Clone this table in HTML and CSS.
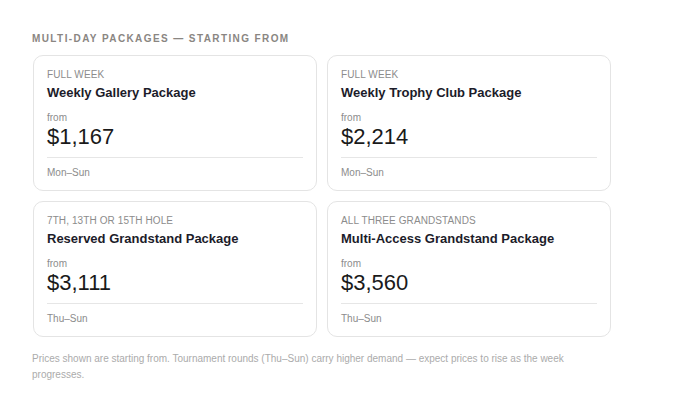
FILE: index.html
```html
<!DOCTYPE html>
<html>
<head>
<meta charset="utf-8">
<link rel="stylesheet" href="styles.css">
</head>
<body>
<main class="section">
  <h2 class="section-title">Multi-day packages — starting from</h2>
  <div class="grid">
    <div class="card">
      <div class="eyebrow">Full week</div>
      <div class="name">Weekly Gallery Package</div>
      <div class="from">from</div>
      <div class="price">$1,167</div>
      <div class="days">Mon–Sun</div>
    </div>
    <div class="card">
      <div class="eyebrow">Full week</div>
      <div class="name">Weekly Trophy Club Package</div>
      <div class="from">from</div>
      <div class="price">$2,214</div>
      <div class="days">Mon–Sun</div>
    </div>
    <div class="card">
      <div class="eyebrow">7th, 13th or 15th hole</div>
      <div class="name">Reserved Grandstand Package</div>
      <div class="from">from</div>
      <div class="price">$3,111</div>
      <div class="days">Thu–Sun</div>
    </div>
    <div class="card">
      <div class="eyebrow">All three grandstands</div>
      <div class="name">Multi-Access Grandstand Package</div>
      <div class="from">from</div>
      <div class="price">$3,560</div>
      <div class="days">Thu–Sun</div>
    </div>
  </div>
  <p class="note">Prices shown are starting from. Tournament rounds (Thu–Sun) carry higher demand — expect prices to rise as the week progresses.</p>
</main>
</body>
</html>
```

FILE: styles.css
```css
* { box-sizing: border-box; }
html, body { margin: 0; padding: 0; background: #fff; }
body { font-family: "Liberation Sans", Arial, sans-serif; color: #1a1a1a; }
.section { width: 580px; margin: 0 0 0 32px; padding-top: 32px; }
.section-title {
  margin: 0 0 10px 0;
  font-size: 10px;
  line-height: 13px;
  font-weight: 700;
  letter-spacing: 1.4px;
  text-transform: uppercase;
  color: #8a8682;
}
.grid {
  display: grid;
  grid-template-columns: 284px 284px;
  gap: 10px 10px;
  margin-left: 1px;
}
.card {
  border: 1px solid #e4e4e4;
  border-radius: 10px;
  padding: 12px 13px 0 13px;
  height: 136px;
  display: flex;
  flex-direction: column;
}
.eyebrow {
  font-size: 10px;
  line-height: 14px;
  text-transform: uppercase;
  color: #8c8c8c;
  letter-spacing: 0.1px;
}
.name {
  font-size: 13px;
  line-height: 18px;
  font-weight: 700;
  color: #1c1c2a;
  margin-top: 2px;
}
.from {
  font-size: 10px;
  line-height: 12px;
  color: #8c8c8c;
  margin-top: 10px;
}
.price {
  font-size: 22px;
  line-height: 26px;
  color: #1a1a1a;
}
.days {
  margin-top: 7px;
  border-top: 1px solid #e6e6e6;
  padding-top: 8px;
  font-size: 10px;
  line-height: 14px;
  color: #8c8c8c;
}
.note {
  margin: 14px 0 0 0;
  font-size: 10px;
  line-height: 16px;
  color: #ababab;
}
```
